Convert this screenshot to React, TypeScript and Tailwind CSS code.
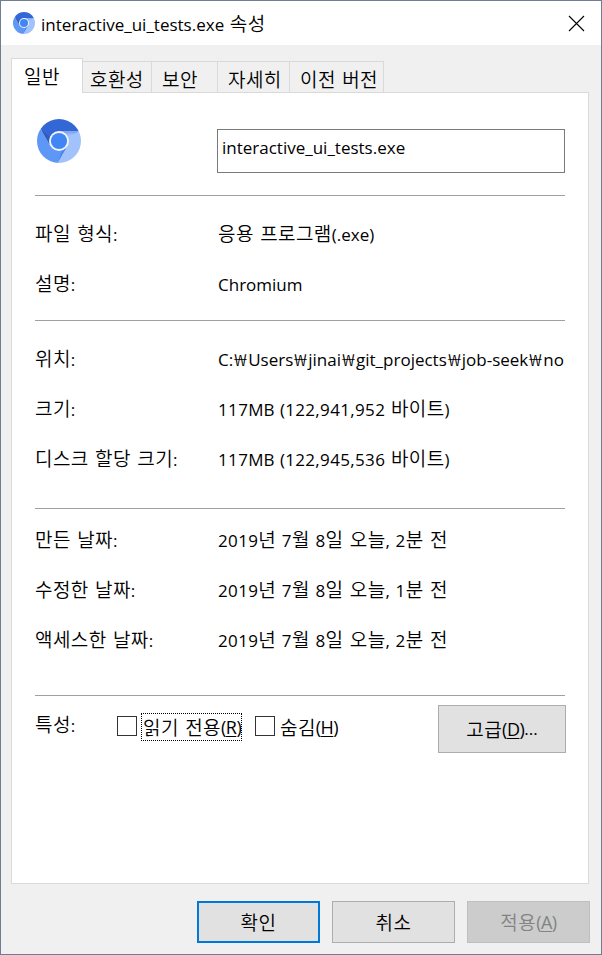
import type { ReactNode } from "react";

const RUNS = /([\uac00-\ud7a3]+(?: [\uac00-\ud7a3]+)*|₩|[0-9][0-9,]*)/;

/** Sets Hangul, won signs, figures and Latin runs each in their own face and tracking. */
function Txt({ children }: { children: string }) {
  return (
    <>
      {children.split(RUNS).map((run, i) => {
        if (run === "₩") {
          return (
            <span key={i} className="inline-block w-[15px] scale-x-135 text-center font-light">
              {run}
            </span>
          );
        }
        if (/^[\uac00-\ud7a3]/.test(run)) {
          return (
            <span
              key={i}
              className="font-['Noto_Sans_CJK_KR',sans-serif] text-[19px] font-[350] tracking-[0.4px] [word-spacing:1.8px]"
            >
              {run}
            </span>
          );
        }
        if (/^[0-9]/.test(run)) {
          return (
            <span key={i} className="tracking-[0.35px]">
              {run}
            </span>
          );
        }
        return (
          <span key={i} className="[word-spacing:1.2px]">
            {run}
          </span>
        );
      })}
    </>
  );
}

function Disc({ size }: { size: number }) {
  return (
    <svg width={size} height={size} viewBox="0 0 44 44" className="block shrink-0">
      <defs>
        <clipPath id={`disc${size}`}>
          <circle cx="22" cy="22" r="22" />
        </clipPath>
        <linearGradient id={`s${size}`} x1="0" y1="0" x2="0" y2="1">
          <stop offset="0" stopColor="#3466c4" stopOpacity="0.45" />
          <stop offset="1" stopColor="#a1c2fa" stopOpacity="0" />
        </linearGradient>
      </defs>
      <g clipPath={`url(#disc${size})`}>
        <path d="M0 0H44V12.3H22L13.4 27L4.5 11.5Z" fill="#3367d6" />
        <path d="M0 4L4.2 11L13.4 27L30.6 27L20.8 44H0Z" fill="#5e97f6" />
        <path d="M22 12.3H44V44H20.8L30.6 27Z" fill="#a1c2fa" />
        <path d="M22 12.3H42L32 18Z" fill={`url(#s${size})`} />
        <path d="M4.2 11L12.2 25L13 18Z" fill="#2a56b5" opacity="0.65" />
        <path d="M20.8 44L30.6 27L25 31Z" fill="#3d74d6" opacity="0.45" />
      </g>
      <circle cx="22" cy="22" r="10" fill="#f3f6fd" />
      <circle cx="22" cy="22" r="8.1" fill="#4285f4" />
    </svg>
  );
}

function Key({ k }: { k: string }) {
  return (
    <span className="text-[18px] tracking-[-0.5px]">
      (<span className="underline decoration-1 underline-offset-2">{k}</span>)
    </span>
  );
}

function Tab({ label, className }: { label: string; className: string }) {
  return (
    <div
      className={`flex h-[31px] items-center border-t border-r border-[#d9d9d9] bg-[#f0f0f0] pt-[3px] ${className}`}
    >
      <Txt>{label}</Txt>
    </div>
  );
}

function Row({ label, value, latin }: { label: string; value: string; latin?: boolean }) {
  return (
    <div className="flex h-[50px] items-center">
      <div className="w-[183px] shrink-0">
        <Txt>{label}</Txt>
      </div>
      <div className={`min-w-0 flex-1 ${latin ? "pt-[2px]" : ""}`}>
        <Txt>{value}</Txt>
      </div>
    </div>
  );
}

function Rule() {
  return <div className="h-px shrink-0 bg-[#a0a0a0]" />;
}

function Button({ className, children }: { className: string; children: ReactNode }) {
  return <button className={`flex items-center justify-center ${className}`}>{children}</button>;
}

export default function App() {
  return (
    <div className="flex h-[955px] w-[602px] flex-col overflow-hidden border border-[#707d93] bg-[#f0f0f0] font-['Open_Sans','Noto_Sans_CJK_KR',sans-serif] text-[17px] leading-6 whitespace-pre text-black">
      <header className="flex h-11 shrink-0 items-center bg-white pr-4 pl-3">
        <Disc size={22} />
        <div className="ml-[6px] flex-1 pt-px">
          <Txt>interactive_ui_tests.exe 속성</Txt>
        </div>
        <svg width="17" height="17" viewBox="0 0 17 17" stroke="#000" strokeWidth="1.1">
          <path d="M1 1L16 16M16 1L1 16" />
        </svg>
      </header>

      <nav className="flex h-[47px] shrink-0 items-end pl-[10px]">
        <div className="z-10 -mb-px flex h-[35px] w-[72px] items-center border border-b-0 border-[#d9d9d9] bg-white pb-px pl-[12px]">
          <Txt>일반</Txt>
        </div>
        <Tab label="호환성" className="w-[69px] pl-[7px]" />
        <Tab label="보안" className="w-[66px] pl-[10px]" />
        <Tab label="자세히" className="w-[72px] pl-[10px]" />
        <Tab label="이전 버전" className="w-[94px] pl-[10px]" />
      </nav>

      <main className="mx-[10px] mr-3 flex h-[792px] w-[578px] shrink-0 flex-col border border-[#d9d9d9] bg-white pr-[23px] pl-[23px]">
        <div className="flex h-[102px] shrink-0 items-start">
          <div className="w-[182px] pt-[26px] pl-[2px]">
            <Disc size={44} />
          </div>
          <div className="mt-9 h-11 w-[348px] border border-[#7a7a7a] pt-[6px] pl-1">
            interactive_ui_tests.exe
          </div>
        </div>
        <Rule />
        <div className="h-[124px] pt-[13px]">
          <Row label="파일 형식:" value="응용 프로그램(.exe)" />
          <Row label="설명:" value="Chromium" latin />
        </div>
        <Rule />
        <div className="h-[187px] pt-[13px]">
          <Row label="위치:" value="C:₩Users₩jinai₩git_projects₩job-seek₩no" latin />
          <Row label="크기:" value="117MB (122,941,952 바이트)" />
          <Row label="디스크 할당 크기:" value="117MB (122,945,536 바이트)" />
        </div>
        <Rule />
        <div className="h-[186px] pt-[6px]">
          <Row label="만든 날짜:" value="2019년 7월 8일 오늘, 2분 전" />
          <Row label="수정한 날짜:" value="2019년 7월 8일 오늘, 1분 전" />
          <Row label="액세스한 날짜:" value="2019년 7월 8일 오늘, 2분 전" />
        </div>
        <Rule />
        <div className="flex items-start">
          <div className="w-[82px] pt-4">
            <Txt>특성:</Txt>
          </div>
          <div className="mt-5 size-5 border border-[#333]" />
          <div className="mt-[17px] ml-1 flex h-[28px] w-[101px] items-center border border-dotted border-black pl-px">
            <Txt>읽기 전용</Txt>
            <Key k="R" />
          </div>
          <div className="mt-5 ml-[13px] size-5 border border-[#333]" />
          <div className="mt-[19px] ml-[5px] flex w-[158px] items-center">
            <Txt>숨김</Txt>
            <Key k="H" />
          </div>
          <Button className="-mr-px mt-[9px] h-12 w-[128px] shrink-0 border border-[#adadad] bg-[#e1e1e1]">
            <Txt>고급</Txt>
            <Key k="D" />
            ...
          </Button>
        </div>
      </main>

      <footer className="mt-[17px] flex justify-end gap-3 pr-[11px]">
        <Button className="h-[42px] w-[123px] border-2 border-[#0078d7] bg-[#e1e1e1]">
          <Txt>확인</Txt>
        </Button>
        <Button className="h-[42px] w-[123px] border border-[#adadad] bg-[#e1e1e1]">
          <Txt>취소</Txt>
        </Button>
        <Button className="h-[42px] w-[123px] border border-[#bfbfbf] bg-[#cccccc] text-[#838383]">
          <Txt>적용</Txt>
          <Key k="A" />
        </Button>
      </footer>
    </div>
  );
}
